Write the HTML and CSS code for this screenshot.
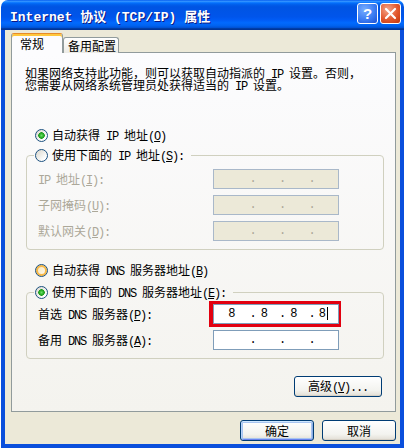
FILE: index.html
```html
<!DOCTYPE html>
<html>
<head>
<meta charset="utf-8">
<title>Internet 协议 (TCP/IP) 属性</title>
<link rel="stylesheet" href="styles.css">
</head>
<body>
<div class="window">
  <div class="titlebar">
    <div class="title">Internet 协议 (TCP/IP) 属性</div>
    <div class="tbtns">
      <span class="tb help">?</span>
      <span class="tb close"><svg width="19" height="19" viewBox="0 0 19 19"><path d="M5 5 L14 14 M14 5 L5 14" stroke="#fff" stroke-width="2.2" stroke-linecap="round"/></svg></span>
    </div>
  </div>
  <div class="frame">
    <div class="tabs">
      <div class="tab active">常规</div>
      <div class="tab">备用配置</div>
    </div>
    <div class="panel">
      <div class="desc">
        <span class="ln">如果网络支持此功能，则可以获取自动指派的<span class="a"> IP </span>设置。否则，</span>
        <span class="ln">您需要从网络系统管理员处获得适当的<span class="a"> IP </span>设置。</span>
      </div>
      <div class="radio r1"><span class="rb on"></span><span class="t">自动获得<span class="a"> IP </span>地址<span class="a">(<u>O</u>)</span></span></div>
      <fieldset class="group g1">
        <legend class="radio"><span class="rb"></span><span class="t">使用下面的<span class="a"> IP </span>地址<span class="a">(<u>S</u>):</span></span></legend>
        <div class="row dis"><span class="lbl"><span class="a">IP </span>地址<span class="a">(<u>I</u>):</span></span><span class="ip dis"><span class="oct"><b></b></span><span class="oct"><b></b></span><span class="oct"><b></b></span><span class="oct"><b></b></span></span></div>
        <div class="row dis"><span class="lbl">子网掩码<span class="a">(<u>U</u>):</span></span><span class="ip dis"><span class="oct"><b></b></span><span class="oct"><b></b></span><span class="oct"><b></b></span><span class="oct"><b></b></span></span></div>
        <div class="row dis"><span class="lbl">默认网关<span class="a">(<u>D</u>):</span></span><span class="ip dis"><span class="oct"><b></b></span><span class="oct"><b></b></span><span class="oct"><b></b></span><span class="oct"><b></b></span></span></div>
      </fieldset>
      <div class="radio r3"><span class="rb hot"></span><span class="t">自动获得<span class="a"> DNS </span>服务器地址<span class="a">(<u>B</u>)</span></span></div>
      <fieldset class="group g2">
        <legend class="radio"><span class="rb on"></span><span class="t">使用下面的<span class="a"> DNS </span>服务器地址<span class="a">(<u>E</u>):</span></span></legend>
        <div class="row"><span class="lbl">首选<span class="a"> DNS </span>服务器<span class="a">(<u>P</u>):</span></span><span class="ip mark"><span class="oct"><b>8</b></span><span class="oct"><b>8</b></span><span class="oct"><b>8</b></span><span class="oct"><b>8<i class="caret"></i></b></span></span></div>
        <div class="row"><span class="lbl">备用<span class="a"> DNS </span>服务器<span class="a">(<u>A</u>):</span></span><span class="ip"><span class="oct"><b></b></span><span class="oct"><b></b></span><span class="oct"><b></b></span><span class="oct"><b></b></span></span></div>
      </fieldset>
      <button class="btn adv">高级<span class="a">(<u>V</u>)...</span></button>
    </div>
    <div class="footer">
      <button class="btn def">确定</button>
      <button class="btn">取消</button>
    </div>
  </div>
</div>
</body>
</html>
```

FILE: styles.css
```css
* { box-sizing: border-box; }
html, body { margin: 0; padding: 0; }
body {
  width: 408px;
  height: 448px;
  overflow: hidden;
  background: #ffffff;
  font-family: "Noto Sans CJK SC", "Noto Sans", sans-serif;
  font-size: 12px;
  color: #000;
}
.a {
  font-family: "Liberation Mono", monospace;
  font-size: 12px;
  letter-spacing: -1.2px;
  line-height: 1;
}
u { text-decoration: underline; text-underline-offset: 1px; }

.window {
  margin-left: 1px;
  width: 403px;
  height: 448px;
  display: flex;
  flex-direction: column;
}
.titlebar {
  flex: none;
  height: 30px;
  border-radius: 7px 7px 0 0;
  padding: 0 3px 0 9px;
  display: flex;
  align-items: center;
  justify-content: space-between;
  background: linear-gradient(to bottom, #0058EE 0%, #3593FF 4%, #288EFF 6%, #127DFF 8%, #036FFC 10%, #0262EE 14%, #0057E5 20%, #0054E3 24%, #0055EB 56%, #005BF5 66%, #026AFE 76%, #0062EF 86%, #0052D6 92%, #0040AB 94%, #003092 100%);
}
.title {
  color: #fff;
  font-family: "Liberation Mono", "Noto Sans CJK SC", monospace;
  font-weight: bold;
  font-size: 13px;
  text-shadow: 1px 1px 0 #0A1883;
  white-space: pre;
}
.tbtns {
  display: flex;
  gap: 2px;
  align-self: flex-start;
  margin-top: 3px;
}
.tb {
  width: 21px;
  height: 21px;
  border: 1px solid #fff;
  border-radius: 3px;
  display: flex;
  align-items: center;
  justify-content: center;
}
.help {
  background: radial-gradient(circle at 35% 30%, #78AEFF, #3C7DF3 55%, #1B4FD2);
  color: #fff;
  font: bold 15px "Liberation Sans", sans-serif;
}
.close {
  background: radial-gradient(circle at 35% 30%, #F4A58A, #E2582D 55%, #C3360C);
}

.frame {
  flex: 1;
  min-height: 0;
  background: #ECE9D8;
  border: 4px solid #0A4FDC;
  border-top: 0;
  padding: 3px 4px 3px 6px;
  display: flex;
  flex-direction: column;
}

.tabs {
  flex: none;
  display: flex;
  height: 20px;
  margin-bottom: -1px;
  position: relative;
  z-index: 1;
}
.tab {
  height: 16px;
  margin-top: 4px;
  width: 56px;
  border: 1px solid #919B9C;
  border-bottom: 0;
  border-radius: 3px 3px 0 0;
  background: linear-gradient(#FFFFFF, #ECEBE6);
  padding: 2px 0 0 4px;
  line-height: 12px;
  white-space: nowrap;
}
.tab.active {
  height: 20px;
  margin-top: 0;
  width: 52px;
  border-top-color: #E68B2C;
  background: #FCFCFE;
  box-shadow: inset 0 2px 0 #FFC73C;
  padding: 4px 0 0 8px;
}

.panel {
  flex: none;
  background: linear-gradient(#FCFCFE, #F4F3EE);
  border: 1px solid #919B9C;
  padding: 14px 0 14px 13px;
  display: flex;
  flex-direction: column;
  align-items: flex-start;
}
.desc {
  display: flex;
  flex-direction: column;
}
.ln {
  display: block;
  height: 12px;
  line-height: 12px;
  white-space: nowrap;
}
.radio {
  display: flex;
  align-items: center;
  height: 14px;
  line-height: 14px;
  white-space: nowrap;
}
.r1 { margin: 37px 0 0 10px; }
.r3 { margin: 13px 0 0 10px; }
.rb {
  flex: none;
  width: 13px;
  height: 13px;
  margin-right: 4px;
  border-radius: 50%;
  border: 1px solid #1C5180;
  background: linear-gradient(135deg, #D9D6CC, #FFFFFF 80%);
}
.rb.on {
  background: radial-gradient(circle at 50% 50%, #6EE06A 0, #2DB12A 2px, #1E9A1E 3px, transparent 3.5px), linear-gradient(135deg, #D9D6CC, #FFFFFF 80%);
}
.rb.hot {
  background: linear-gradient(135deg, #F2E2B8, #FFF8E6 80%);
  box-shadow: inset 0 0 0 2px #F8B846;
}

.group {
  margin: 6px 0 0 1px;
  width: 358px;
  border: 1px solid #D0D0BF;
  border-radius: 4px;
  padding: 7px 0 8px 11px;
  min-inline-size: 0;
}
.g2 { margin-top: 8px; padding-top: 5px; }
.group legend {
  padding: 0 7px 0 1px;
  margin-left: -4px;
}
.row {
  display: flex;
  align-items: center;
  height: 20px;
}
.row + .row { margin-top: 6px; }
.lbl {
  width: 175px;
  white-space: nowrap;
  line-height: 14px;
}
.row.dis .lbl { color: #ACA899; }

.ip {
  width: 126px;
  height: 20px;
  border: 1px solid #7F9DB9;
  background: #fff;
  display: flex;
  font-family: "Liberation Mono", monospace;
  font-size: 12px;
}
.ip.dis {
  background: #ECE9D8;
  border-color: #A9B8C9;
  color: #ACA899;
}
.ip.mark { box-shadow: -1px 0 0 3px #E2000F; }
.oct {
  flex: 1;
  display: flex;
  align-items: center;
  padding-right: 6px;
}
.oct:first-child { padding-left: 6px; }
.oct + .oct::before {
  content: ".";
  width: 6px;
  text-align: center;
}
.oct b {
  flex: 1;
  font-weight: normal;
  text-align: center;
}
.caret {
  display: inline-block;
  width: 1px;
  height: 13px;
  background: #000;
  vertical-align: middle;
  margin-left: 1px;
}

.btn {
  flex: none;
  height: 21px;
  width: 74px;
  padding: 0;
  border: 1px solid #003C74;
  border-radius: 3px;
  background: linear-gradient(#FFFFFF, #F3F3EF 70%, #E2DED4);
  box-shadow: inset 0 -1px 0 #D6D0C5;
  font-family: "Noto Sans CJK SC", sans-serif;
  font-size: 12px;
  line-height: 12px;
  color: #000;
}
.btn.def {
  box-shadow: inset 0 1px 0 #CEE7FF, inset 1px 0 0 #B8D3F8, inset -1px 0 0 #89ADE4, inset 0 -1px 0 #6982EE, inset 0 0 0 2px #A8C4F0;
}
.adv {
  width: 88px;
  align-self: flex-end;
  margin: 17px 13px 0 0;
}
.footer {
  margin-top: 8px;
  display: flex;
  justify-content: flex-end;
  gap: 8px;
}
```
